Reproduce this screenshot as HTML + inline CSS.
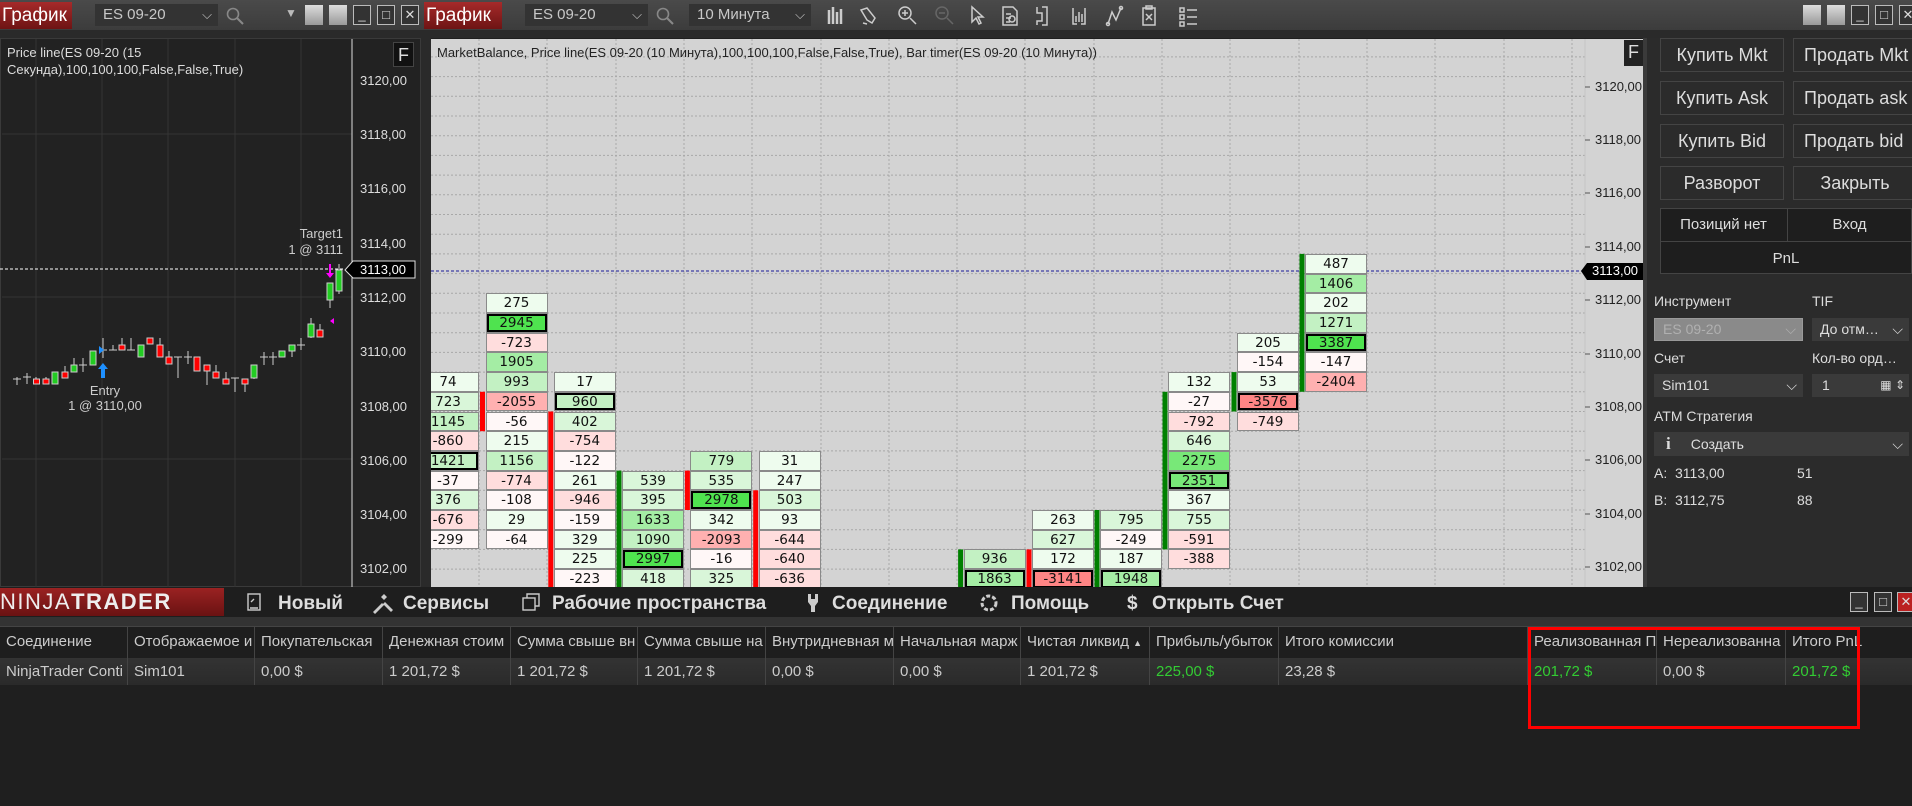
<!DOCTYPE html>
<html><head><meta charset="utf-8"><style>
*{box-sizing:border-box;margin:0;padding:0}
body{width:1912px;height:806px;overflow:hidden;background:#1f1f1f;font-family:"Liberation Sans","DejaVu Sans",sans-serif;position:relative}
.a{position:absolute}
.tb{left:0;top:0;width:1912px;height:30px;background:linear-gradient(#4a4a4a,#3c3c3c)}
.gr{background:linear-gradient(#a52a2a,#6e1414);color:#fff;font-size:19px;line-height:27px;padding-left:2px;top:2px;height:27px}
.cb{background:#333;color:#c8c8c8;font-size:15px;line-height:22px;padding-left:8px;top:4px;height:22px}
.cb i{position:absolute;right:6px;top:0;font-style:normal;font-size:13px}
.wb{top:5px;width:18px;height:20px;background:linear-gradient(#ddd,#999);}
.wb2{top:5px;width:18px;height:20px;border:1px solid #bbb;background:#333;color:#ddd;font-size:13px;text-align:center;line-height:18px}
.cell{position:absolute;width:62px;height:19.7px;font-family:"DejaVu Sans",sans-serif;font-size:13.5px;text-align:center;line-height:19px;color:#111;border:1px solid #8a8a8a}
.w{background:#eefcee}.lg{background:#d9f6d9}.lg2{background:#c3f1c3}.g2{background:#a4eda4}.g3{background:#78e878}.G{background:#4fe34f}.wr{background:#fff7f7}.lr{background:#ffdddd}.r2{background:#ffb0b0}.r{background:#ff8585}
.O{box-shadow:inset 0 0 0 2px #000}
.btn{background:#2b2b2b;border:1px solid #444;color:#ddd;font-size:18px;text-align:center;line-height:32px;height:34px}
.lab{color:#ddd;font-size:14px}
.th{top:626px;height:32px;line-height:32px;color:#ccc;font-size:15px;padding-left:6px;border-right:1px solid #444;overflow:hidden;white-space:nowrap}
.td{top:658px;height:27px;line-height:27px;color:#ccc;font-size:15px;padding-left:6px;border-right:1px solid #444;overflow:hidden;white-space:nowrap}
.gn{color:#33cc33}
.mi{top:592px;color:#ddd;font-size:19px;font-weight:bold;line-height:24px}
</style></head><body>
<div class="a tb"></div>
<div class="a" style="left:0;top:30px;width:1912px;height:8px;background:#2a2a2a"></div>
<div class="a gr" style="left:0;width:72px">График</div>
<div class="a cb" style="left:95px;width:123px">ES 09-20<i>&#9013;</i></div>
<svg class="a" style="left:225px;top:6px" width="20" height="20"><circle cx="8" cy="8" r="5.5" fill="none" stroke="#888" stroke-width="1.6"/><line x1="12" y1="12" x2="18" y2="18" stroke="#888" stroke-width="2"/></svg>
<div class="a" style="left:285px;top:6px;color:#bbb;font-size:12px">&#9660;</div>
<div class="a wb" style="left:305px"></div><div class="a wb" style="left:329px"></div>
<div class="a wb2" style="left:353px">_</div><div class="a wb2" style="left:377px">&#9633;</div><div class="a wb2" style="left:401px;font-weight:bold">&#10005;</div>
<div class="a gr" style="left:424px;width:78px">График</div>
<div class="a cb" style="left:525px;width:123px">ES 09-20<i>&#9013;</i></div>
<svg class="a" style="left:655px;top:6px" width="20" height="20"><circle cx="8" cy="8" r="5.5" fill="none" stroke="#888" stroke-width="1.6"/><line x1="12" y1="12" x2="18" y2="18" stroke="#888" stroke-width="2"/></svg>
<div class="a cb" style="left:689px;width:122px">10 Минута<i>&#9013;</i></div>
<svg class="a" style="left:825px;top:4px" width="380" height="24" fill="none" stroke="#ccc" stroke-width="1.5">
<path d="M4 6v14M8 3v17M12 8v12M16 5v15" stroke-width="2.5"/>
<path d="M42 4l8 10-3 5-5-3-6-10zM38 19l4 1"/>
<circle cx="80" cy="9" r="6"/><path d="M85 14l6 6M77 9h6M80 6v6"/>
<circle cx="117" cy="9" r="6" stroke="#666"/><path d="M122 14l6 6M114 9h6" stroke="#666"/>
<path d="M147 3v15l4-4 3 6 2-1-3-6h5z"/>
<path d="M178 3h10l4 4v14h-14zM181 10h5M181 14h5M181 18h4"/><circle cx="187" cy="15" r="3"/>
<path d="M212 3v6h5v8h-5v4M217 3h5v18h-5"/>
<path d="M248 4v16h4M260 4v16h-4M251 18V12M254 18V8M257 18V10"/>
<path d="M283 20l4-12 4 8 5-12" /><circle cx="283" cy="20" r="1.5"/><circle cx="296" cy="4" r="1.5"/>
<path d="M318 4h12v17h-12zM321 2h6v3h-6zM321 10l6 6M327 10l-6 6"/>
<path d="M355 4h4v4h-4zM355 11h4v4h-4zM355 18h4v4h-4zM362 6h10M362 13h10M362 20h10"/>
</svg>
<div class="a wb" style="left:1803px"></div><div class="a wb" style="left:1827px"></div>
<div class="a wb2" style="left:1851px">_</div><div class="a wb2" style="left:1875px">&#9633;</div><div class="a wb2" style="left:1899px;font-weight:bold">&#10005;</div>

<div class="a" style="left:0;top:38px;width:421px;height:549px;background:#222;border:1px solid #3a3a3a"></div>
<svg class="a" style="left:0;top:0" width="421" height="587">
<g stroke="#343434" stroke-width="1"><line x1="36" y1="39" x2="36" y2="587"/><line x1="102" y1="39" x2="102" y2="587"/><line x1="168" y1="39" x2="168" y2="587"/><line x1="235" y1="39" x2="235" y2="587"/><line x1="301" y1="39" x2="301" y2="587"/>
<line x1="2" y1="134" x2="352" y2="134"/><line x1="2" y1="297" x2="352" y2="297"/><line x1="2" y1="459" x2="352" y2="459"/></g>
<line x1="352" y1="39" x2="352" y2="587" stroke="#ddd"/>
<line x1="0" y1="269" x2="345" y2="269" stroke="#fff" stroke-dasharray="3,2"/>
<g stroke="#ccc" stroke-width="1">
<path d="M17 377v8M13 379h8M27 373v11M23 377h8M36 377v7M46 377v7M55 372v12M65 366v12M74 358v14M83 358v14M79 365h8M93 351v14M103 338v20M99 350h8M113 345v5M109 350h8M122 338v12M131 338v12M127 350h8M141 345v12M150 338v6M160 338v17M169 351v13M178 357v21M174 357h8M188 351v13M184 357h8M197 357v14M207 365v20M216 365v13M226 372v12M235 378v14M231 378h8M245 379v13M254 365v14M264 352v13M260 357h8M273 352v13M269 357h8M282 351v6M292 345v12M301 338v12M297 345h8M311 318v20M320 324v13M330 283v25M339 264v30"/>
</g>
<g stroke="#ccc" stroke-width="1">
<rect x="33.5" y="379" width="6" height="5" fill="#f00"/><rect x="43" y="379" width="6" height="5" fill="#f00"/><rect x="52" y="372" width="6" height="12" fill="#2c2"/><rect x="62" y="372" width="6" height="6" fill="#f00"/><rect x="71" y="365" width="6" height="7" fill="#2c2"/><rect x="90" y="351" width="6" height="14" fill="#2c2"/><rect x="119" y="345" width="6" height="5" fill="#f00"/><rect x="138" y="345" width="6" height="12" fill="#2c2"/><rect x="147" y="338" width="6" height="6" fill="#f00"/><rect x="157" y="345" width="6" height="12" fill="#f00"/><rect x="166" y="357" width="6" height="7" fill="#f00"/><rect x="194" y="357" width="6" height="14" fill="#f00"/><rect x="204" y="365" width="6" height="6" fill="#f00"/><rect x="213" y="372" width="6" height="6" fill="#f00"/><rect x="223" y="379" width="6" height="5" fill="#f00"/><rect x="242" y="379" width="6" height="5" fill="#f00"/><rect x="251" y="365" width="6" height="13" fill="#2c2"/><rect x="279" y="351" width="6" height="6" fill="#2c2"/><rect x="289" y="345" width="6" height="6" fill="#2c2"/><rect x="308" y="324" width="6" height="13" fill="#2c2"/><rect x="317" y="330" width="6" height="7" fill="#f00"/><rect x="327" y="283" width="6" height="17" fill="#2c2"/><rect x="336" y="270" width="6" height="21" fill="#2c2"/>
</g>
<path d="M101 378v-9h-3l5-6 5 6h-3v9z" fill="#1e90ff"/><path d="M99 346l5 4-5 4z" fill="#1e90ff"/>
<path d="M329 264v9h-3l4 5 4-5h-3v-9z" fill="#f0f"/><path d="M334 318l-4 3 4 3z" fill="#f0f"/>
<path d="M345 270l8-9h62v17h-62z" fill="#000" stroke="#ddd"/>
</svg>
<div class="a" style="left:7px;top:44px;color:#ddd;font-size:13px;line-height:17px">Price line(ES 09-20 (15<br>Секунда),100,100,100,False,False,True)</div>
<div class="a" style="left:393px;top:42px;width:21px;height:25px;background:#111;border:1px solid #444;color:#ddd;font-size:18px;text-align:center;line-height:24px">F</div>
<div class="a" style="left:280px;top:226px;width:63px;text-align:right;color:#ccc;font-size:13px;line-height:16px">Target1<br>1 @ 3111</div>
<div class="a" style="left:55px;top:383px;width:100px;text-align:center;color:#ccc;font-size:13px;line-height:15px">Entry<br>1 @ 3110,00</div>
<div class="a" style="left:360px;top:73px;color:#ddd;font-size:13px;line-height:16px">3120,00</div>
<div class="a" style="left:360px;top:127px;color:#ddd;font-size:13px">3118,00</div>
<div class="a" style="left:360px;top:181px;color:#ddd;font-size:13px">3116,00</div>
<div class="a" style="left:360px;top:236px;color:#ddd;font-size:13px">3114,00</div>
<div class="a" style="left:360px;top:262px;color:#fff;font-size:13px">3113,00</div>
<div class="a" style="left:360px;top:290px;color:#ddd;font-size:13px">3112,00</div>
<div class="a" style="left:360px;top:344px;color:#ddd;font-size:13px">3110,00</div>
<div class="a" style="left:360px;top:399px;color:#ddd;font-size:13px">3108,00</div>
<div class="a" style="left:360px;top:453px;color:#ddd;font-size:13px">3106,00</div>
<div class="a" style="left:360px;top:507px;color:#ddd;font-size:13px">3104,00</div>
<div class="a" style="left:360px;top:561px;color:#ddd;font-size:13px">3102,00</div>
<div class="a" style="left:421px;top:38px;width:10px;height:549px;background:#2a2a2a"></div>

<div class="a" style="left:0;top:0;width:1912px;height:806px;clip-path:inset(39px 269px 219px 431px)">
<div class="a" style="left:431px;top:39px;width:1212px;height:548px;background:#d3d3d3"></div>
<svg class="a" style="left:0;top:0" width="1912" height="806">
<g stroke="#a8a8a8" stroke-dasharray="2,2" stroke-width="1">
<path d="M431 37.2H1585M431 56.9H1585M431 76.6H1585M431 96.3H1585M431 116H1585M431 135.7H1585M431 155.4H1585M431 175.1H1585M431 194.8H1585M431 214.5H1585M431 234.2H1585M431 253.9H1585M431 273.6H1585M431 293.3H1585M431 313H1585M431 332.7H1585M431 352.4H1585M431 372.1H1585M431 391.8H1585M431 411.5H1585M431 431.2H1585M431 450.9H1585M431 470.6H1585M431 490.3H1585M431 510H1585M431 529.7H1585M431 549.4H1585M431 569.1H1585"/>
<path d="M479 39V587M547 39V587M616 39V587M684 39V587M752 39V587M821 39V587M889 39V587M957 39V587M1025 39V587M1094 39V587M1162 39V587M1230 39V587M1299 39V587M1367 39V587M1435 39V587M1504 39V587M1572 39V587"/>
</g>
<line x1="1585" y1="39" x2="1585" y2="587" stroke="#c4c4c4"/>
<g stroke="#555"><path d="M1585 87h5M1585 140h5M1585 193h5M1585 247h5M1585 300h5M1585 354h5M1585 407h5M1585 460h5M1585 514h5M1585 567h5"/></g>
<line x1="431" y1="271" x2="1585" y2="271" stroke="#1a1a9a" stroke-dasharray="3,2"/>
<path d="M1581 271l6-8h56v17h-56z" fill="#000"/>
<rect x="480" y="391.8" width="5" height="39.4" fill="#f00"/>
<rect x="548.3" y="411.5" width="5" height="190" fill="#f00"/>
<rect x="616.5" y="470.6" width="5" height="130" fill="#008000"/>
<rect x="684.9" y="470.6" width="5" height="39.4" fill="#f00"/>
<rect x="753.2" y="490.3" width="5" height="110" fill="#f00"/>
<rect x="958.1" y="549.4" width="5" height="50" fill="#008000"/>
<rect x="1026.5" y="549.4" width="5" height="50" fill="#f00"/>
<rect x="1094.5" y="510" width="5" height="90" fill="#008000"/>
<rect x="1162.5" y="391.8" width="5" height="157.6" fill="#008000"/>
<rect x="1231.5" y="372.1" width="5" height="39.4" fill="#008000"/>
<rect x="1299.5" y="253.9" width="5" height="137.9" fill="#008000"/>
</svg>
<div class="a" style="left:437px;top:45px;color:#222;font-size:13px">MarketBalance, Price line(ES 09-20 (10 Минута),100,100,100,False,False,True), Bar timer(ES 09-20 (10 Минута))</div>
<div class="a" style="left:1595px;top:79px;color:#222;font-size:13px">3120,00</div>
<div class="a" style="left:1595px;top:132px;color:#222;font-size:13px">3118,00</div>
<div class="a" style="left:1595px;top:185px;color:#222;font-size:13px">3116,00</div>
<div class="a" style="left:1595px;top:239px;color:#222;font-size:13px">3114,00</div>
<div class="a" style="left:1592px;top:263px;color:#fff;font-size:13px">3113,00</div>
<div class="a" style="left:1595px;top:292px;color:#222;font-size:13px">3112,00</div>
<div class="a" style="left:1595px;top:346px;color:#222;font-size:13px">3110,00</div>
<div class="a" style="left:1595px;top:399px;color:#222;font-size:13px">3108,00</div>
<div class="a" style="left:1595px;top:452px;color:#222;font-size:13px">3106,00</div>
<div class="a" style="left:1595px;top:506px;color:#222;font-size:13px">3104,00</div>
<div class="a" style="left:1595px;top:559px;color:#222;font-size:13px">3102,00</div>
<div class="a" style="left:1624px;top:40px;width:19px;height:26px;background:#222;color:#ddd;font-size:18px;text-align:center;line-height:25px">F</div>

<div class="cell w" style="left:417px;top:372.1px">74</div>
<div class="cell lg" style="left:417px;top:391.8px">723</div>
<div class="cell lg2" style="left:417px;top:411.5px">1145</div>
<div class="cell lr" style="left:417px;top:431.2px">-860</div>
<div class="cell lg2 O" style="left:417px;top:450.9px">1421</div>
<div class="cell wr" style="left:417px;top:470.6px">-37</div>
<div class="cell lg" style="left:417px;top:490.3px">376</div>
<div class="cell lr" style="left:417px;top:510px">-676</div>
<div class="cell wr" style="left:417px;top:529.7px">-299</div>
<div class="cell w" style="left:485.5px;top:293.3px">275</div>
<div class="cell G O" style="left:485.5px;top:313px">2945</div>
<div class="cell lr" style="left:485.5px;top:332.7px">-723</div>
<div class="cell g2" style="left:485.5px;top:352.4px">1905</div>
<div class="cell lg2" style="left:485.5px;top:372.1px">993</div>
<div class="cell r2" style="left:485.5px;top:391.8px">-2055</div>
<div class="cell wr" style="left:485.5px;top:411.5px">-56</div>
<div class="cell w" style="left:485.5px;top:431.2px">215</div>
<div class="cell lg2" style="left:485.5px;top:450.9px">1156</div>
<div class="cell lr" style="left:485.5px;top:470.6px">-774</div>
<div class="cell wr" style="left:485.5px;top:490.3px">-108</div>
<div class="cell w" style="left:485.5px;top:510px">29</div>
<div class="cell wr" style="left:485.5px;top:529.7px">-64</div>
<div class="cell w" style="left:553.8px;top:372.1px">17</div>
<div class="cell lg2 O" style="left:553.8px;top:391.8px">960</div>
<div class="cell lg" style="left:553.8px;top:411.5px">402</div>
<div class="cell lr" style="left:553.8px;top:431.2px">-754</div>
<div class="cell wr" style="left:553.8px;top:450.9px">-122</div>
<div class="cell w" style="left:553.8px;top:470.6px">261</div>
<div class="cell lr" style="left:553.8px;top:490.3px">-946</div>
<div class="cell wr" style="left:553.8px;top:510px">-159</div>
<div class="cell w" style="left:553.8px;top:529.7px">329</div>
<div class="cell w" style="left:553.8px;top:549.4px">225</div>
<div class="cell wr" style="left:553.8px;top:569.1px">-223</div>
<div class="cell lg" style="left:622px;top:470.6px">539</div>
<div class="cell lg" style="left:622px;top:490.3px">395</div>
<div class="cell g2" style="left:622px;top:510px">1633</div>
<div class="cell lg2" style="left:622px;top:529.7px">1090</div>
<div class="cell G O" style="left:622px;top:549.4px">2997</div>
<div class="cell lg" style="left:622px;top:569.1px">418</div>
<div class="cell lg2" style="left:690.4px;top:450.9px">779</div>
<div class="cell lg" style="left:690.4px;top:470.6px">535</div>
<div class="cell G O" style="left:690.4px;top:490.3px">2978</div>
<div class="cell w" style="left:690.4px;top:510px">342</div>
<div class="cell r2" style="left:690.4px;top:529.7px">-2093</div>
<div class="cell wr" style="left:690.4px;top:549.4px">-16</div>
<div class="cell lg" style="left:690.4px;top:569.1px">325</div>
<div class="cell w" style="left:758.7px;top:450.9px">31</div>
<div class="cell w" style="left:758.7px;top:470.6px">247</div>
<div class="cell lg" style="left:758.7px;top:490.3px">503</div>
<div class="cell w" style="left:758.7px;top:510px">93</div>
<div class="cell lr" style="left:758.7px;top:529.7px">-644</div>
<div class="cell lr" style="left:758.7px;top:549.4px">-640</div>
<div class="cell lr" style="left:758.7px;top:569.1px">-636</div>
<div class="cell lg2" style="left:963.6px;top:549.4px">936</div>
<div class="cell g2 O" style="left:963.6px;top:569.1px">1863</div>
<div class="cell w" style="left:1032px;top:510px">263</div>
<div class="cell lg" style="left:1032px;top:529.7px">627</div>
<div class="cell w" style="left:1032px;top:549.4px">172</div>
<div class="cell r O" style="left:1032px;top:569.1px">-3141</div>
<div class="cell lg" style="left:1100px;top:510px">795</div>
<div class="cell wr" style="left:1100px;top:529.7px">-249</div>
<div class="cell w" style="left:1100px;top:549.4px">187</div>
<div class="cell g2 O" style="left:1100px;top:569.1px">1948</div>
<div class="cell w" style="left:1168px;top:372.1px">132</div>
<div class="cell wr" style="left:1168px;top:391.8px">-27</div>
<div class="cell lr" style="left:1168px;top:411.5px">-792</div>
<div class="cell lg" style="left:1168px;top:431.2px">646</div>
<div class="cell g3" style="left:1168px;top:450.9px">2275</div>
<div class="cell g3 O" style="left:1168px;top:470.6px">2351</div>
<div class="cell w" style="left:1168px;top:490.3px">367</div>
<div class="cell lg" style="left:1168px;top:510px">755</div>
<div class="cell lr" style="left:1168px;top:529.7px">-591</div>
<div class="cell lr" style="left:1168px;top:549.4px">-388</div>
<div class="cell w" style="left:1237px;top:332.7px">205</div>
<div class="cell wr" style="left:1237px;top:352.4px">-154</div>
<div class="cell w" style="left:1237px;top:372.1px">53</div>
<div class="cell r O" style="left:1237px;top:391.8px">-3576</div>
<div class="cell lr" style="left:1237px;top:411.5px">-749</div>
<div class="cell w" style="left:1305px;top:253.9px">487</div>
<div class="cell g2" style="left:1305px;top:273.6px">1406</div>
<div class="cell w" style="left:1305px;top:293.3px">202</div>
<div class="cell lg2" style="left:1305px;top:313px">1271</div>
<div class="cell G O" style="left:1305px;top:332.7px">3387</div>
<div class="cell wr" style="left:1305px;top:352.4px">-147</div>
<div class="cell r2" style="left:1305px;top:372.1px">-2404</div>
</div>

<div class="a" style="left:1643px;top:38px;width:269px;height:549px;background:#2b2b2b;border-left:4px solid #3a3a3a"></div>
<div class="a btn" style="left:1660px;top:38px;width:124px">Купить Mkt</div>
<div class="a btn" style="left:1793px;top:38px;width:124px;text-align:left;padding-left:10px;white-space:nowrap;overflow:hidden">Продать Mkt</div>
<div class="a btn" style="left:1660px;top:81px;width:124px">Купить Ask</div>
<div class="a btn" style="left:1793px;top:81px;width:124px;text-align:left;padding-left:10px;white-space:nowrap;overflow:hidden">Продать ask</div>
<div class="a btn" style="left:1660px;top:124px;width:124px">Купить Bid</div>
<div class="a btn" style="left:1793px;top:124px;width:124px;text-align:left;padding-left:10px;white-space:nowrap;overflow:hidden">Продать bid</div>
<div class="a btn" style="left:1660px;top:166px;width:124px">Разворот</div>
<div class="a btn" style="left:1793px;top:166px;width:124px">Закрыть</div>
<div class="a" style="left:1660px;top:208px;width:252px;height:66px;background:#1e1e1e;border:1px solid #444"></div>
<div class="a" style="left:1787px;top:208px;width:1px;height:33px;background:#444"></div>
<div class="a" style="left:1660px;top:241px;width:252px;height:1px;background:#444"></div>
<div class="a" style="left:1660px;top:216px;width:127px;text-align:center;color:#ddd;font-size:15px">Позиций нет</div>
<div class="a" style="left:1787px;top:216px;width:125px;text-align:center;color:#ddd;font-size:15px">Вход</div>
<div class="a" style="left:1660px;top:250px;width:252px;text-align:center;color:#ddd;font-size:15px">PnL</div>
<div class="a lab" style="left:1654px;top:293px">Инструмент</div>
<div class="a lab" style="left:1812px;top:293px">TIF</div>
<div class="a" style="left:1654px;top:318px;width:149px;height:23px;background:#8a8a8a;border:1px solid #999;color:#b0b0b0;font-size:14px;line-height:21px;padding-left:8px">ES 09-20<span style="position:absolute;right:6px">&#9013;</span></div>
<div class="a" style="left:1812px;top:318px;width:97px;height:23px;background:#3a3a3a;color:#ddd;font-size:14px;line-height:23px;padding-left:8px">До отм…<span style="position:absolute;right:6px">&#9013;</span></div>
<div class="a lab" style="left:1654px;top:350px">Счет</div>
<div class="a lab" style="left:1812px;top:350px">Кол-во орд…</div>
<div class="a" style="left:1654px;top:374px;width:149px;height:23px;background:#3a3a3a;color:#ddd;font-size:14px;line-height:23px;padding-left:8px">Sim101<span style="position:absolute;right:6px">&#9013;</span></div>
<div class="a" style="left:1812px;top:374px;width:97px;height:23px;background:#3a3a3a;color:#ddd;font-size:14px;line-height:23px;padding-left:10px">1<span style="position:absolute;right:4px;font-size:12px">&#9638; &#8661;</span></div>
<div class="a lab" style="left:1654px;top:408px">ATM Стратегия</div>
<div class="a" style="left:1654px;top:432px;width:255px;height:24px;background:#3a3a3a;color:#ddd;font-size:14px;line-height:24px;padding-left:12px"><b style="font-family:'Liberation Serif',serif;font-size:17px">i</b><span style="margin-left:20px">Создать</span><span style="position:absolute;right:6px">&#9013;</span></div>
<div class="a lab" style="left:1654px;top:465px">A:&nbsp; 3113,00</div>
<div class="a lab" style="left:1797px;top:465px">51</div>
<div class="a lab" style="left:1654px;top:492px">B:&nbsp; 3112,75</div>
<div class="a lab" style="left:1797px;top:492px">88</div>

<div class="a" style="left:0;top:587px;width:1912px;height:30px;background:#1e1e1e"></div>
<div class="a" style="left:0;top:588px;width:224px;height:28px;background:linear-gradient(#9a2222,#6a1212);color:#eee;font-size:22px;line-height:28px;letter-spacing:1.5px">NINJA<b>TRADER</b></div>
<svg class="a" style="left:247px;top:593px" width="14" height="18" fill="none" stroke="#ccc" stroke-width="1.4"><rect x="1" y="1" width="12" height="16"/><path d="M3 15h8M4 9l3-3"/></svg>
<div class="a mi" style="left:278px">Новый</div>
<svg class="a" style="left:371px;top:592px" width="22" height="22" fill="#ccc"><path d="M2 20l9-9 2 2-9 9zM13 2l3 3-3 3-3-3zM20 20l-8-8 2-2 8 8z"/></svg>
<div class="a mi" style="left:403px">Сервисы</div>
<svg class="a" style="left:522px;top:593px" width="18" height="18" fill="none" stroke="#ccc" stroke-width="1.4"><rect x="1" y="5" width="12" height="12"/><path d="M5 5V1h12v12h-4"/></svg>
<div class="a mi" style="left:552px">Рабочие пространства</div>
<svg class="a" style="left:806px;top:592px" width="14" height="22" fill="#ccc"><path d="M2 2h3v5h4V2h3v8l-3 4v6H5v-6l-3-4z"/></svg>
<div class="a mi" style="left:832px">Соединение</div>
<svg class="a" style="left:979px;top:593px" width="20" height="20" fill="none" stroke="#ccc" stroke-width="3" stroke-dasharray="4,2"><circle cx="10" cy="10" r="7"/></svg>
<div class="a mi" style="left:1011px">Помощь</div>
<div class="a mi" style="left:1127px">$</div>
<div class="a mi" style="left:1152px">Открыть Счет</div>
<div class="a wb2" style="left:1850px;top:592px">_</div><div class="a wb2" style="left:1874px;top:592px">&#9633;</div><div class="a wb2" style="left:1897px;top:592px;background:#b22;font-weight:bold">&#10005;</div>
<div class="a" style="left:0;top:617px;width:1912px;height:9px;background:#333"></div>

<div class="a" style="left:0;top:626px;width:1912px;height:32px;background:#1e1e1e;border-top:1px solid #444"></div>
<div class="a" style="left:0;top:658px;width:1912px;height:27px;background:linear-gradient(#333,#2a2a2a)"></div>
<div class="a th" style="left:0;width:128px">Соединение</div>
<div class="a th" style="left:128px;width:127px">Отображаемое и</div>
<div class="a th" style="left:255px;width:128px">Покупательская</div>
<div class="a th" style="left:383px;width:128px">Денежная стоим</div>
<div class="a th" style="left:511px;width:127px">Сумма свыше вн</div>
<div class="a th" style="left:638px;width:128px">Сумма свыше на</div>
<div class="a th" style="left:766px;width:128px">Внутридневная м</div>
<div class="a th" style="left:894px;width:127px">Начальная марж</div>
<div class="a th" style="left:1021px;width:129px">Чистая ликвид <span style="font-size:9px">&#9650;</span></div>
<div class="a th" style="left:1150px;width:129px">Прибыль/убыток</div>
<div class="a th" style="left:1279px;width:249px">Итого комиссии</div>
<div class="a th" style="left:1528px;width:129px">Реализованная П</div>
<div class="a th" style="left:1657px;width:129px">Нереализованна</div>
<div class="a th" style="left:1786px;width:128px">Итого PnL</div>
<div class="a td" style="left:0;width:128px">NinjaTrader Conti</div>
<div class="a td" style="left:128px;width:127px">Sim101</div>
<div class="a td" style="left:255px;width:128px">0,00 $</div>
<div class="a td" style="left:383px;width:128px">1 201,72 $</div>
<div class="a td" style="left:511px;width:127px">1 201,72 $</div>
<div class="a td" style="left:638px;width:128px">1 201,72 $</div>
<div class="a td" style="left:766px;width:128px">0,00 $</div>
<div class="a td" style="left:894px;width:127px">0,00 $</div>
<div class="a td" style="left:1021px;width:129px">1 201,72 $</div>
<div class="a td gn" style="left:1150px;width:129px">225,00 $</div>
<div class="a td" style="left:1279px;width:249px">23,28 $</div>
<div class="a td gn" style="left:1528px;width:129px">201,72 $</div>
<div class="a td" style="left:1657px;width:129px">0,00 $</div>
<div class="a td gn" style="left:1786px;width:128px;border-right:none">201,72 $</div>
<div class="a" style="left:1528px;top:627px;width:332px;height:102px;border:3px solid #f00"></div>
</body></html>
